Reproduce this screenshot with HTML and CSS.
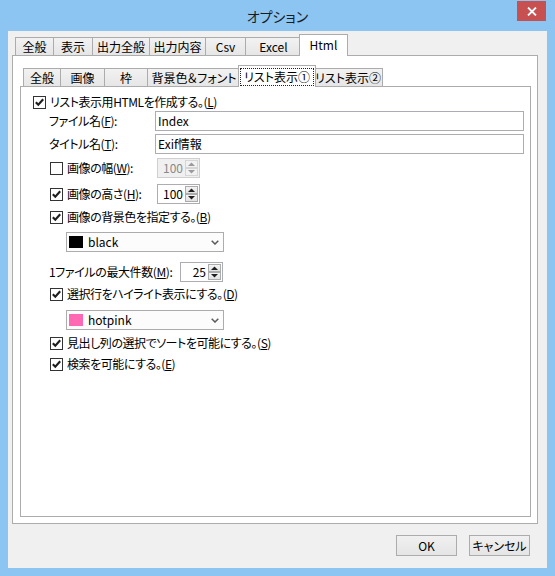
FILE: index.html
```html
<!DOCTYPE html>
<html lang="ja">
<head>
<meta charset="utf-8">
<title>オプション</title>
<link rel="stylesheet" href="styles.css">
</head>
<body>
<div class="window">
  <div class="titlebar">
    <div class="title">オプション</div>
    <div class="close"><svg width="10" height="9" viewBox="0 0 10 9"><path d="M1 0.5L9 8.5M9 0.5L1 8.5" stroke="#fff" stroke-width="1.8" fill="none"/></svg></div>
  </div>
  <div class="client">
    <div class="tabctl">
      <div class="strip">
        <div class="tab o1">全般</div>
        <div class="tab o2">表示</div>
        <div class="tab o3">出力全般</div>
        <div class="tab o4">出力内容</div>
        <div class="tab o5">Csv</div>
        <div class="tab o6">Excel</div>
        <div class="tab sel o7">Html</div>
      </div>
      <div class="panel outer-panel">
        <div class="tabctl inner">
          <div class="strip">
            <div class="tab i1">全般</div>
            <div class="tab i2">画像</div>
            <div class="tab i3">枠</div>
            <div class="tab i4">背景色＆フォント</div>
            <div class="tab sel i5"><span class="focus">リスト表示①</span></div>
            <div class="tab i6">リスト表示②</div>
          </div>
          <div class="panel inner-panel">
            <div class="row cbrow r1"><span class="cb on"><svg width="11" height="11" viewBox="0 0 11 11"><path d="M1.8 5.2L4.3 7.8L9.2 2.3" stroke="#1e1e1e" stroke-width="2.1" fill="none"/></svg></span><span class="lbl">リスト表示用HTMLを作成する。(<u>L</u>)</span></div>
            <div class="row field r2"><span class="flabel">ファイル名(<u>F</u>):</span><div class="tb">Index</div></div>
            <div class="row field r3"><span class="flabel">タイトル名(<u>T</u>):</span><div class="tb">Exif情報</div></div>
            <div class="row cbrow sub r4"><span class="cb"></span><span class="lbl nlabel">画像の幅(<u>W</u>):</span>
              <div class="num dis"><span class="val">100</span><span class="spin"><span class="sb"><svg width="7" height="4" viewBox="0 0 7 4"><path d="M0 4L3.5 0.5L7 4Z" fill="#9a9a9a"/></svg></span><span class="sb"><svg width="7" height="4" viewBox="0 0 7 4"><path d="M0 0L3.5 3.5L7 0Z" fill="#9a9a9a"/></svg></span></span></div>
            </div>
            <div class="row cbrow sub r5"><span class="cb on"><svg width="11" height="11" viewBox="0 0 11 11"><path d="M1.8 5.2L4.3 7.8L9.2 2.3" stroke="#1e1e1e" stroke-width="2.1" fill="none"/></svg></span><span class="lbl nlabel">画像の高さ(<u>H</u>):</span>
              <div class="num"><span class="val">100</span><span class="spin"><span class="sb"><svg width="7" height="4" viewBox="0 0 7 4"><path d="M0 4L3.5 0.5L7 4Z" fill="#1e1e1e"/></svg></span><span class="sb"><svg width="7" height="4" viewBox="0 0 7 4"><path d="M0 0L3.5 3.5L7 0Z" fill="#1e1e1e"/></svg></span></span></div>
            </div>
            <div class="row cbrow sub r6"><span class="cb on"><svg width="11" height="11" viewBox="0 0 11 11"><path d="M1.8 5.2L4.3 7.8L9.2 2.3" stroke="#1e1e1e" stroke-width="2.1" fill="none"/></svg></span><span class="lbl">画像の背景色を指定する。(<u>B</u>)</span></div>
            <div class="row comborow r7"><div class="combo"><span class="swatch black"></span><span class="ctext">black</span><svg class="chev" width="8" height="5" viewBox="0 0 8 5"><path d="M0.7 0.7L4 4L7.3 0.7" stroke="#5a5a5a" stroke-width="1.5" fill="none"/></svg></div></div>
            <div class="row field r8"><span class="flabel mlabel">1ファイルの最大件数(<u>M</u>):</span>
              <div class="num"><span class="val">25</span><span class="spin"><span class="sb"><svg width="7" height="4" viewBox="0 0 7 4"><path d="M0 4L3.5 0.5L7 4Z" fill="#1e1e1e"/></svg></span><span class="sb"><svg width="7" height="4" viewBox="0 0 7 4"><path d="M0 0L3.5 3.5L7 0Z" fill="#1e1e1e"/></svg></span></span></div>
            </div>
            <div class="row cbrow sub r9"><span class="cb on"><svg width="11" height="11" viewBox="0 0 11 11"><path d="M1.8 5.2L4.3 7.8L9.2 2.3" stroke="#1e1e1e" stroke-width="2.1" fill="none"/></svg></span><span class="lbl">選択行をハイライト表示にする。(<u>D</u>)</span></div>
            <div class="row comborow r10"><div class="combo"><span class="swatch pink"></span><span class="ctext">hotpink</span><svg class="chev" width="8" height="5" viewBox="0 0 8 5"><path d="M0.7 0.7L4 4L7.3 0.7" stroke="#5a5a5a" stroke-width="1.5" fill="none"/></svg></div></div>
            <div class="row cbrow sub r11"><span class="cb on"><svg width="11" height="11" viewBox="0 0 11 11"><path d="M1.8 5.2L4.3 7.8L9.2 2.3" stroke="#1e1e1e" stroke-width="2.1" fill="none"/></svg></span><span class="lbl">見出し列の選択でソートを可能にする。(<u>S</u>)</span></div>
            <div class="row cbrow sub r12"><span class="cb on"><svg width="11" height="11" viewBox="0 0 11 11"><path d="M1.8 5.2L4.3 7.8L9.2 2.3" stroke="#1e1e1e" stroke-width="2.1" fill="none"/></svg></span><span class="lbl">検索を可能にする。(<u>E</u>)</span></div>
          </div>
        </div>
      </div>
    </div>
    <div class="buttons">
      <div class="btn">OK</div>
      <div class="btn">キャンセル</div>
    </div>
  </div>
</div>
</body>
</html>
```

FILE: styles.css
```css
* { box-sizing: border-box; }

body {
  margin: 0;
  font-family: "Noto Sans CJK JP", "Noto Sans", sans-serif;
  font-size: 12px;
  line-height: 16px;
  color: #000;
  font-feature-settings: "palt";
}

u { text-decoration: underline; text-underline-offset: 1px; }

.window {
  width: 555px;
  height: 576px;
  background: #8cc4f2;
  display: flex;
  flex-direction: column;
}

.titlebar {
  height: 31px;
  display: grid;
  grid-template-columns: 1fr auto 1fr;
}

.title {
  grid-column: 2;
  padding-top: 7px;
  font-size: 14px;
  line-height: 18px;
  color: #1b1b1b;
}

.close {
  grid-column: 3;
  justify-self: end;
  width: 29px;
  height: 20px;
  margin: 1px 9px 0 0;
  background: #c75050;
  display: flex;
  align-items: center;
  justify-content: center;
}

.client {
  height: 537px;
  margin: 0 8px;
  background: #f0f0f0;
  padding: 3px 9px 0 4px;
  display: flex;
  flex-direction: column;
}

.tabctl { display: flex; flex-direction: column; }
.tabctl.inner { flex: 1; }

.strip {
  display: flex;
  align-items: flex-end;
  height: 21px;
  padding-left: 3px;
}

.tab {
  height: 18px;
  border: 1px solid #acacac;
  border-bottom: 0;
  background: linear-gradient(#f2f2f2, #e6e6e6);
  margin-right: -1px;
  display: flex;
  align-items: center;
  justify-content: center;
  white-space: nowrap;
  padding-top: 1px;
}

.tab.sel {
  height: 22px;
  margin-left: -2px;
  margin-right: -3px;
  margin-bottom: -1px;
  background: #fff;
  position: relative;
  z-index: 1;
  align-items: flex-start;
  padding-top: 2px;
}

.o1 { width: 39px; }
.o2 { width: 40px; }
.o3 { width: 58px; }
.o4 { width: 57px; }
.o5 { width: 41px; }
.o6 { width: 57px; }
.o7 { width: 49px; }

.i1 { width: 38px; }
.i2 { width: 45px; }
.i3 { width: 44px; }
.i4 { width: 94px; }
.i5 { width: 78px; }
.i6 { width: 70px; }

.focus {
  border: 1px dotted #222;
  padding: 0 3px;
  height: 18px;
  line-height: 16px;
}

.panel {
  border: 1px solid #acacac;
  background: #fff;
}

.outer-panel {
  height: 469px;
  padding: 9px 6px 6px 7px;
  display: flex;
  flex-direction: column;
}

.inner-panel {
  flex: 1;
  display: flex;
  flex-direction: column;
}

.row { display: flex; align-items: center; flex: none; }

.cbrow { height: 16px; }
.cbrow.sub { padding-left: 29px; }
.field { height: 20px; padding-left: 28px; }
.comborow { height: 20px; padding-left: 45px; }

.r1 { margin-top: 7px; padding-left: 12px; }
.r2 { margin-top: 1px; }
.r3 { margin-top: 3px; }
.r4 { margin-top: 4px; height: 20px; }
.r5 { margin-top: 6px; height: 20px; }
.r6 { margin-top: 5px; }
.r7 { margin-top: 7px; }
.r8 { margin-top: 10px; }
.r9 { margin-top: 4px; }
.r10 { margin-top: 8px; }
.r11 { margin-top: 5px; }
.r12 { margin-top: 5px; }

.cb {
  width: 13px;
  height: 13px;
  border: 1px solid #333;
  background: #fff;
  flex: none;
  display: flex;
}

.lbl { margin-left: 4px; white-space: nowrap; letter-spacing: -0.45px; }
.nlabel { width: 90px; }

.flabel { width: 106px; white-space: nowrap; letter-spacing: -0.4px; }
.mlabel { width: 131px; }

.tb {
  width: 369px;
  height: 20px;
  border: 1px solid #abadb3;
  background: #fff;
  padding-left: 2px;
  line-height: 18px;
}

.num {
  width: 43px;
  height: 20px;
  border: 1px solid #abadb3;
  background: #fff;
  display: flex;
}

.num .val {
  flex: 1;
  text-align: right;
  padding-right: 2px;
  line-height: 18px;
}

.spin {
  width: 14px;
  display: flex;
  flex-direction: column;
  padding: 1px 1px 1px 0;
}

.sb {
  flex: 1;
  border: 1px solid #acacac;
  background: linear-gradient(#f4f4f4, #e2e2e2);
  display: flex;
  align-items: center;
  justify-content: center;
}

.num.dis { background: #f0f0f0; border-color: #cfcfcf; }
.num.dis .val { color: #8a8a8a; }
.num.dis .sb { border-color: #d5d5d5; background: #f2f2f2; }

.combo {
  width: 158px;
  height: 20px;
  border: 1px solid #acacac;
  background: #fcfcfc;
  display: flex;
  align-items: center;
  padding-left: 2px;
}

.swatch { width: 14px; height: 12px; flex: none; }
.swatch.black { background: #000; }
.swatch.pink { background: #ff69b4; }

.ctext { margin-left: 5px; }
.chev { margin-left: auto; margin-right: 4px; }

.buttons {
  display: flex;
  justify-content: flex-end;
  gap: 12px;
  margin-top: 11px;
  padding-right: 8px;
}

.btn {
  width: 61px;
  height: 21px;
  border: 1px solid #acacac;
  background: linear-gradient(#f0f0f0, #e5e5e5);
  display: flex;
  align-items: center;
  justify-content: center;
}
```
